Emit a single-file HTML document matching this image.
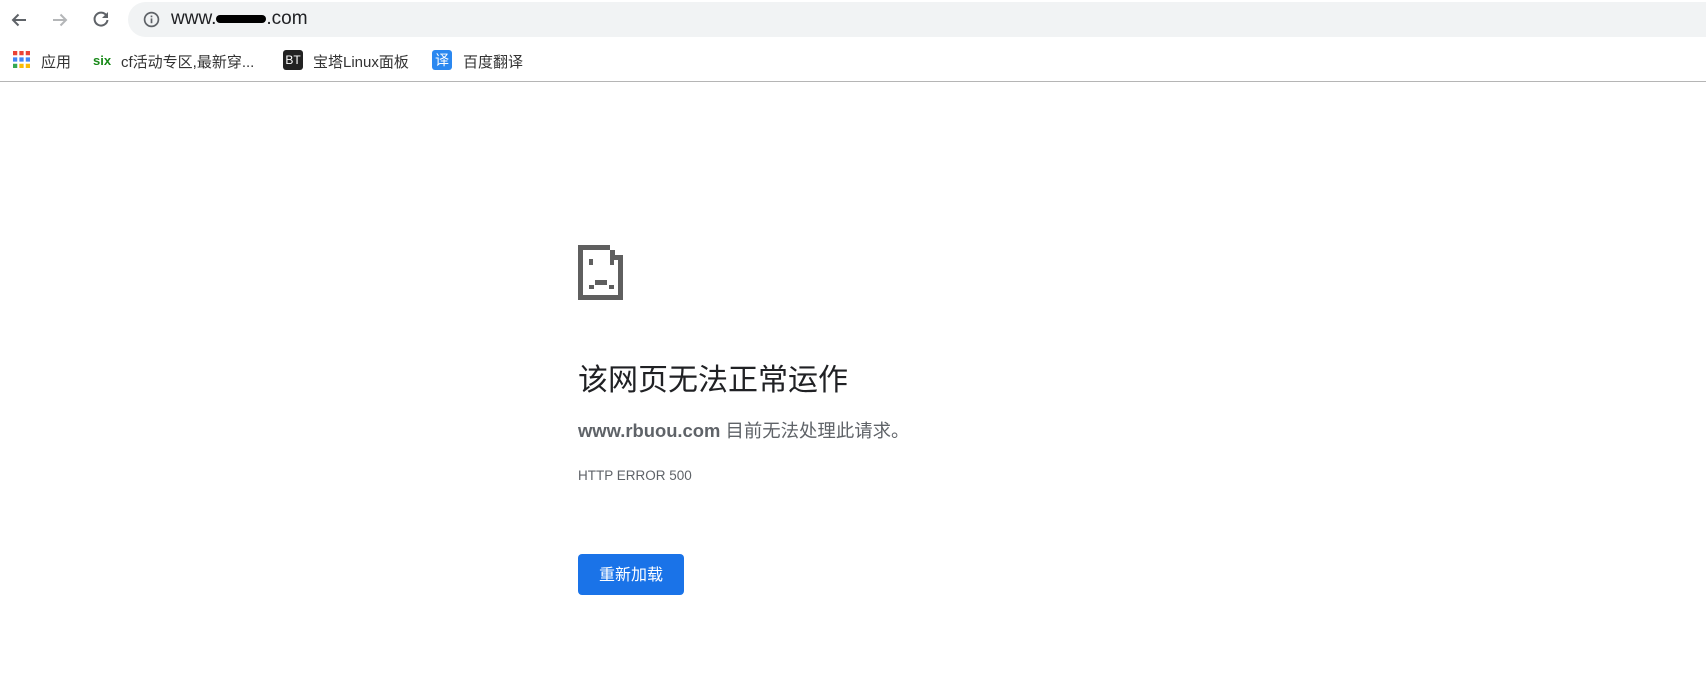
<!DOCTYPE html>
<html><head><meta charset="utf-8"><style>
*{margin:0;padding:0;box-sizing:border-box}
body{width:1706px;height:693px;background:#fff;position:relative;overflow:hidden;font-family:"Liberation Sans","Noto Sans CJK SC",sans-serif}
.a{position:absolute;white-space:nowrap}
.bar{position:absolute;left:128px;top:2px;width:1578px;height:35px;background:#f1f3f4;border-radius:18px 0 0 18px}
.bm{font-size:15px;color:#333;top:51px}
</style></head><body>
<svg class="a" style="left:9px;top:10px" width="20" height="20" viewBox="0 0 20 20"><path d="M17 10H4M9.5 4.5L4 10l5.5 5.5" fill="none" stroke="#5f6368" stroke-width="2"/></svg>
<svg class="a" style="left:50px;top:10px" width="20" height="20" viewBox="0 0 20 20"><path d="M3 10h13M10.5 4.5L16 10l-5.5 5.5" fill="none" stroke="#b4b6b8" stroke-width="2"/></svg>
<svg class="a" style="left:91px;top:9px" width="20" height="20" viewBox="0 0 20 20"><path d="M15.5 6.5A6.5 6.5 0 1 0 16.5 11" fill="none" stroke="#5f6368" stroke-width="2"/><path d="M17 3v6h-6z" fill="#5f6368"/></svg>
<div class="bar"></div>
<svg class="a" style="left:143px;top:11px" width="17" height="17" viewBox="0 0 16 16"><circle cx="8" cy="8" r="6.5" fill="none" stroke="#5f6368" stroke-width="1.6"/><rect x="7.2" y="7" width="1.6" height="4.5" fill="#5f6368"/><rect x="7.2" y="4.3" width="1.6" height="1.6" fill="#5f6368"/></svg>
<div class="a" style="left:171px;top:8px;font-size:19px;color:#202124">www.<span style="background:#000;color:#000;border-radius:5px;display:inline-block;height:8px;line-height:8px;width:50px;vertical-align:middle"></span>.com</div>
<svg class="a" style="left:13px;top:51px" width="17" height="17" viewBox="0 0 16 16"><g fill="#ea4335"><rect x="0" y="0" width="4" height="4"/><rect x="6" y="0" width="4" height="4"/><rect x="12" y="0" width="4" height="4"/></g><g fill="#4285f4"><rect x="0" y="6" width="4" height="4"/><rect x="6" y="6" width="4" height="4"/><rect x="12" y="6" width="4" height="4"/></g><g fill="#34a853"><rect x="0" y="12" width="4" height="4"/></g><g fill="#fbbc05"><rect x="6" y="12" width="4" height="4"/><rect x="12" y="12" width="4" height="4"/></g></svg>
<div class="a bm" style="left:41px">应用</div>
<div class="a bm" style="left:93px;color:#1a8a1a;font-size:13px;top:53px;font-weight:bold">six</div>
<div class="a bm" style="left:121px">cf活动专区,最新穿...</div>
<div class="a" style="left:283px;top:50px;width:20px;height:20px;background:#222;border-radius:3px;color:#fff;font-size:12px;text-align:center;line-height:20px">BT</div>
<div class="a bm" style="left:313px">宝塔Linux面板</div>
<div class="a" style="left:432px;top:50px;width:20px;height:20px;background:#2b88f0;border-radius:3px;color:#fff;font-size:14px;text-align:center;line-height:20px">译</div>
<div class="a bm" style="left:463px">百度翻译</div>
<div class="a" style="left:0;top:81px;width:1706px;height:1px;background:#b5b5b5"></div>
<svg class="a" style="left:578px;top:245px" width="45" height="55" viewBox="0 0 45 55" fill="#5f5f5f">
<rect x="0" y="0" width="5" height="55"/><rect x="0" y="50" width="45" height="5"/><rect x="40" y="10" width="5" height="45"/><rect x="0" y="0" width="32" height="5"/>
<rect x="32" y="5" width="5" height="5"/><rect x="37" y="10" width="5" height="5"/><rect x="32" y="10" width="5" height="5"/>
<rect x="11" y="14" width="4" height="6"/><rect x="32" y="14" width="4" height="6"/>
<rect x="17" y="35" width="12" height="5"/><rect x="11" y="40" width="5" height="4"/><rect x="31" y="40" width="5" height="4"/>
</svg>
<div class="a" style="left:578px;top:361px;font-size:30px;line-height:40px;color:#202124">该网页无法正常运作</div>
<div class="a" style="left:578px;top:419px;font-size:18.4px;line-height:24px;color:#5f6368"><b>www.rbuou.com</b> 目前无法处理此请求。</div>
<div class="a" style="left:578px;top:467px;font-size:13.5px;line-height:18px;color:#5f6368">HTTP ERROR 500</div>
<div class="a" style="left:578px;top:554px;width:106px;height:41px;background:#1a73e8;border-radius:4px;color:#fff;font-size:16px;line-height:43px;text-align:center">重新加载</div>
</body></html>
